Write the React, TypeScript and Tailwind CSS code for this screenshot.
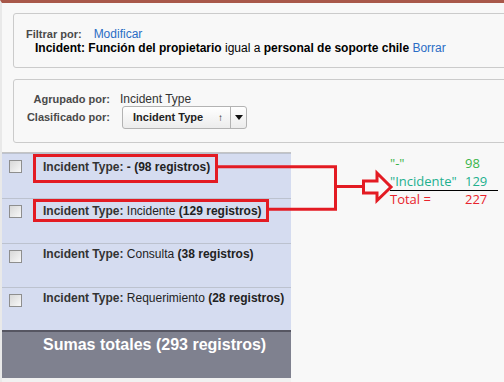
import React from 'react';

const rows = [
  { value: '-', count: 98, h: 'h-[45px]', box: 'w-[185px] pt-[2px] pb-[5px]' },
  { value: 'Incidente', count: 129, h: 'h-[45px]', box: 'w-[236px] pt-[1px]' },
  { value: 'Consulta', count: 38, h: 'h-[44px]', box: '' },
  { value: 'Requerimiento', count: 28, h: 'h-[43px]', box: '' },
];

function Checkbox() {
  return (
    <span className="mt-[6px] ml-[7px] block h-[13px] w-[13px] shrink-0 border border-[#8e8e8e] bg-gradient-to-br from-[#d8d8d8] to-[#f8f8f8]" />
  );
}

function GroupRow({ value, count, h, box }: (typeof rows)[number]) {
  const label = (
    <>
      <b className="text-[#333]">Incident Type:</b>{' '}
      {value === '-' ? <b>-</b> : <span>{value}</span>} <b>({count} registros)</b>
    </>
  );
  return (
    <div className={`flex items-start border-t border-[#bcc2cf] ${h}`}>
      <Checkbox />
      {box ? (
        <span className={`ml-[11px] block border-[3px] border-[#e31b23] pl-[7px] leading-4 ${box}`}>{label}</span>
      ) : (
        <span className="ml-[21px] block pt-[2px] leading-4">{label}</span>
      )}
    </div>
  );
}

export default function App() {
  return (
    <div className="h-[382px] w-[504px] overflow-hidden border-t-[3px] border-l-2 border-t-[#a8584a] border-l-[#e9e9e9] bg-[#f8f8f8] font-['Liberation_Sans',Arial,sans-serif] text-[#222]">
      {/* Filter box */}
      <div className="ml-[11px] mt-[10px] h-[55px] w-[500px] rounded-[3px] border border-[#cbcbcb] pt-[13px] pl-3">
        <div className="flex h-[14px] items-center gap-3">
          <span className="text-[11px] font-bold text-[#4a4a4a]">Filtrar por:</span>
          <span className="text-[12px] text-[#2a6dc5]">Modificar</span>
        </div>
        <div className="flex h-[14px] items-center pl-[9px] text-[12px] text-black">
          <span>
            <b>Incident: Función del propietario</b> igual a <b>personal de soporte chile</b>{' '}
            <span className="text-[#2a6dc5]">Borrar</span>
          </span>
        </div>
      </div>

      {/* Grouping box */}
      <div className="ml-[11px] mt-[11px] h-[64px] w-[500px] rounded-[3px] border border-[#cbcbcb] pt-[12px] pl-3">
        <div className="grid grid-cols-[84px_auto] items-center gap-x-[10px]">
          <span className="h-[14px] text-right text-[11px] font-bold leading-[14px] text-[#4a4a4a]">Agrupado por:</span>
          <span className="h-[14px] text-[12px] leading-[14px] text-[#333]">Incident Type</span>
          <span className="text-right text-[11px] font-bold text-[#4a4a4a]">Clasificado por:</span>
          <div className="ml-[2px] flex h-[23px] w-[125px] items-stretch rounded-[3px] border border-[#b3b3b3] bg-gradient-to-b from-white to-[#ececec]">
            <span className="flex flex-1 items-center justify-between pl-[10px] pr-[7px] text-[11px] font-bold text-[#222]">
              Incident Type <span className="text-[10px] font-bold">↑</span>
            </span>
            <span className="flex w-[16px] items-center justify-center border-l border-[#b3b3b3]">
              <svg width="8" height="5" viewBox="0 0 8 5">
                <path d="M0 0h8L4 5z" fill="#111" />
              </svg>
            </span>
          </div>
        </div>
      </div>

      {/* Report area */}
      <div className="relative mt-[9px] flex">
        <div className="w-[289px] border-t border-[#c4c4c4] bg-[#d5dcf0] text-[12px]">
          {rows.map((r) => (
            <GroupRow key={r.value} {...r} />
          ))}
          <div className="h-[48px] border-t-2 border-[#565662] bg-[#7f818f] pt-[3px] pl-[41px] text-[16px] font-bold leading-5 text-white">
            Sumas totales (293 registros)
          </div>
          <div className="h-[10px] bg-[#f1f1f1]" />
        </div>

        {/* Annotation connectors */}
        <svg className="pointer-events-none absolute -left-[2px] top-0" width="504" height="80" viewBox="0 0 504 80">
          <g stroke="#e31b23" strokeWidth="3" fill="none">
            <path d="M218 14.7H337M268 57.3H337M335.5 13.2V58.8M335.5 34.5H363" />
            <path d="M363.5 29H377V21L391 35L377 48.5V41H363.5Z" />
          </g>
        </svg>

        {/* Sum annotation */}
        <div className="absolute left-[388px] top-[2px] w-[108px] font-['Open_Sans',sans-serif] text-[13px]">
          <div className="grid h-[18px] grid-cols-[75px_auto] items-center leading-[18px] text-[#3ab54a]">
            <span>"-"</span>
            <span>98</span>
          </div>
          <div className="grid h-[18px] grid-cols-[75px_auto] items-center leading-[18px] text-[#22b08e]">
            <span>"Incidente"</span>
            <span>129</span>
          </div>
          <div className="grid h-[18px] grid-cols-[75px_auto] items-center border-t border-black leading-[17px] text-[#e8232c]">
            <span>Total =</span>
            <span>227</span>
          </div>
        </div>
      </div>
    </div>
  );
}
